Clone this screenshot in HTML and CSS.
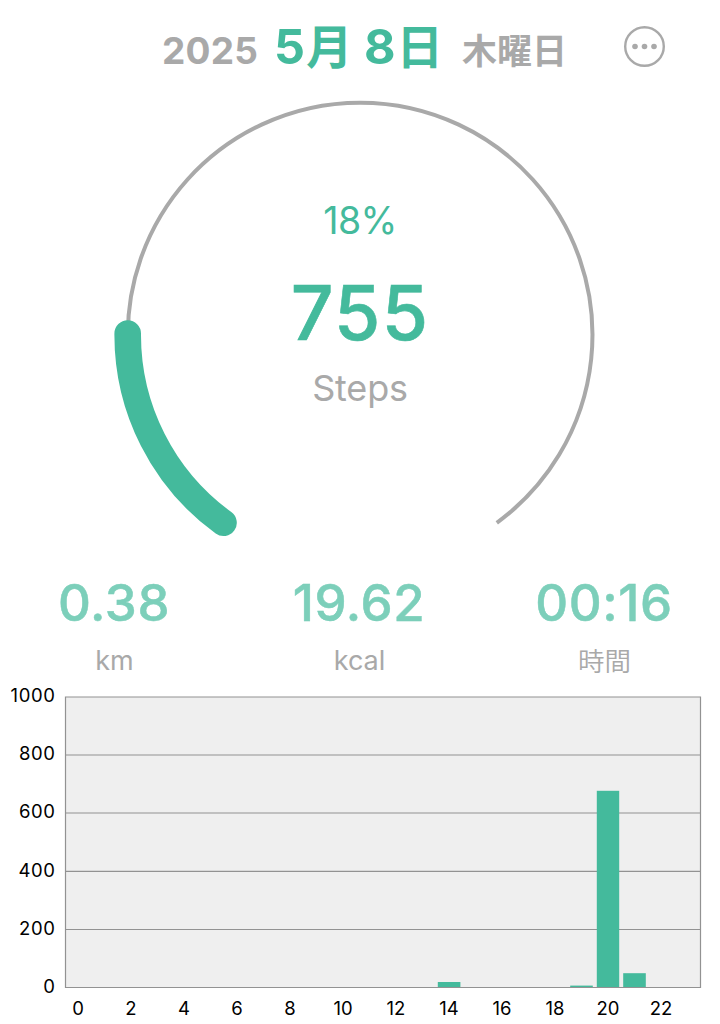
FILE: index.html
```
<!DOCTYPE html>
<html lang="ja">
  <head>
    <meta charset="utf-8">
    <title>Steps</title>
    <link rel="stylesheet" href="styles.css">
  </head>
  <body>
    <header class="header">
      <span class="year">2025</span>
      <h1 class="date">5<span class="kanji">月</span> 8<span class="kanji">日</span></h1>
      <span class="weekday">木曜日</span>
      <button type="button" class="menu-button" aria-label="メニュー">
        <svg width="42" height="42" viewBox="0 0 42 42">
          <circle cx="21.5" cy="21.5" r="19.3" fill="none" stroke="currentColor" stroke-width="2.4"/>
          <circle cx="12" cy="21.5" r="2.8" fill="currentColor"/>
          <circle cx="21.5" cy="21.5" r="2.8" fill="currentColor"/>
          <circle cx="31" cy="21.5" r="2.8" fill="currentColor"/>
        </svg>
      </button>
    </header>

    <section class="gauge">
      <svg class="gauge-ring" width="500" height="450" viewBox="0 0 500 450">
        <path class="gauge-track" d="M113.5 432.8 A232.3 232.3 0 1 1 386.8 432.8"/>
        <path class="gauge-progress" d="M113.5 432.8 A232.3 232.3 0 0 1 17.7 243.5"/>
      </svg>
      <div class="gauge-text">
        <div class="percent">18%</div>
        <div class="steps">755</div>
        <div class="steps-label">Steps</div>
      </div>
    </section>

    <section class="stats">
      <div class="stat">
        <div class="stat-value">0.38</div>
        <div class="stat-label">km</div>
      </div>
      <div class="stat">
        <div class="stat-value">19.62</div>
        <div class="stat-label">kcal</div>
      </div>
      <div class="stat">
        <div class="stat-value">00:16</div>
        <div class="stat-label kanji">時間</div>
      </div>
    </section>

    <svg class="chart" width="720" height="344" viewBox="0 680 720 344">
      <rect class="plot" x="65.5" y="697" width="635" height="290.5"/>
      <path class="grid-lines" d="M65.5 755H700.5 M65.5 813H700.5 M65.5 871.3H700.5 M65.5 929.5H700.5"/>
      <g class="bars">
        <rect x="437.8" y="982" width="22.6" height="5.5"/>
        <rect x="570.2" y="985.6" width="22.6" height="1.9"/>
        <rect x="596.8" y="790.8" width="22.4" height="196.7"/>
        <rect x="623.2" y="973.2" width="22.6" height="14.3"/>
      </g>
      <path class="frame" d="M65.5 697H700.5V987.5H65.5Z"/>
      <g class="y-labels">
        <text x="55.5" y="702">1000</text>
        <text x="55.5" y="760.3">800</text>
        <text x="55.5" y="818.3">600</text>
        <text x="55.5" y="876.7">400</text>
        <text x="55.5" y="934.8">200</text>
        <text x="55.5" y="992.7">0</text>
      </g>
      <g class="x-labels">
        <text x="78" y="1014.6">0</text>
        <text x="131" y="1014.6">2</text>
        <text x="184" y="1014.6">4</text>
        <text x="237" y="1014.6">6</text>
        <text x="290" y="1014.6">8</text>
        <text x="343" y="1014.6">10</text>
        <text x="396" y="1014.6">12</text>
        <text x="449" y="1014.6">14</text>
        <text x="502" y="1014.6">16</text>
        <text x="555" y="1014.6">18</text>
        <text x="608" y="1014.6">20</text>
        <text x="661" y="1014.6">22</text>
      </g>
    </svg>
  </body>
</html>
```

FILE: styles.css
```
:root {
  --color-main: #44ba9c;
  --color-main-light: #7ccfba;
  --color-gray: #a9a9a9;
  --color-plot: #efefef;
  --color-line: #929292;
}

body {
  margin: 0;
  width: 720px;
  height: 1024px;
  overflow: hidden;
  background: white;
  font-family: Inter, "Noto Sans CJK JP", sans-serif;
}

.header {
  display: flex;
  align-items: baseline;
  height: 90px;
  padding-left: 162px;
  box-sizing: border-box;
  line-height: 93px;
  white-space: nowrap;
  color: var(--color-gray);
}

.year {
  width: 112px;
  font-size: 37px;
  font-weight: 700;
  letter-spacing: 0.2px;
}

.date {
  width: 188px;
  margin: 0;
  font-size: 48.5px;
  font-weight: 700;
  color: var(--color-main);
}

.date .kanji {
  margin-left: 1px;
  font-size: 46.5px;
}

.weekday {
  width: 161px;
  font-size: 35px;
  font-weight: 700;
}

.menu-button {
  align-self: flex-start;
  margin-top: 25px;
  padding: 0;
  border: none;
  background: none;
  line-height: 0;
  color: var(--color-gray);
}

.gauge {
  display: grid;
  justify-content: center;
  height: 480px;
}

.gauge-ring,
.gauge-text {
  grid-area: 1 / 1;
}

.gauge-track {
  fill: none;
  stroke: var(--color-gray);
  stroke-width: 4;
}

.gauge-progress {
  fill: none;
  stroke: var(--color-main);
  stroke-width: 26.6;
  stroke-linecap: round;
}

.gauge-text {
  padding-top: 106px;
  text-align: center;
}

.percent {
  font-size: 37.5px;
  font-weight: 400;
  line-height: 50px;
  letter-spacing: -0.6px;
  color: var(--color-main);
}

.steps {
  margin-top: 22px;
  font-size: 75px;
  font-weight: 500;
  line-height: 90px;
  letter-spacing: 1.2px;
  color: var(--color-main);
  -webkit-text-stroke: 0.6px var(--color-main);
}

.steps-label {
  margin-top: 5px;
  font-size: 36px;
  font-weight: 400;
  line-height: 50px;
  letter-spacing: -0.2px;
  color: var(--color-gray);
}

.stats {
  display: grid;
  grid-template-columns: repeat(3, 140px);
  column-gap: 105px;
  height: 110px;
  padding-left: 44px;
  text-align: center;
}

.stat-value {
  padding-top: 3px;
  font-size: 51px;
  font-weight: 500;
  line-height: 60px;
  letter-spacing: 0.6px;
  color: var(--color-main-light);
  -webkit-text-stroke: 0.5px var(--color-main-light);
}

.stat-label {
  margin-top: 8px;
  padding-left: 1px;
  font-size: 27px;
  font-weight: 400;
  line-height: 40px;
  color: var(--color-gray);
}

.stat-label.kanji {
  font-size: 26.5px;
  font-weight: 350;
}

.chart {
  display: block;
  font-size: 18.5px;
}

.plot {
  fill: var(--color-plot);
}

.grid-lines,
.frame {
  fill: none;
  stroke: var(--color-line);
  stroke-width: 1.2;
}

.bars {
  fill: var(--color-main);
}

.y-labels {
  text-anchor: end;
  letter-spacing: 0.6px;
}

.x-labels {
  text-anchor: middle;
}
```
